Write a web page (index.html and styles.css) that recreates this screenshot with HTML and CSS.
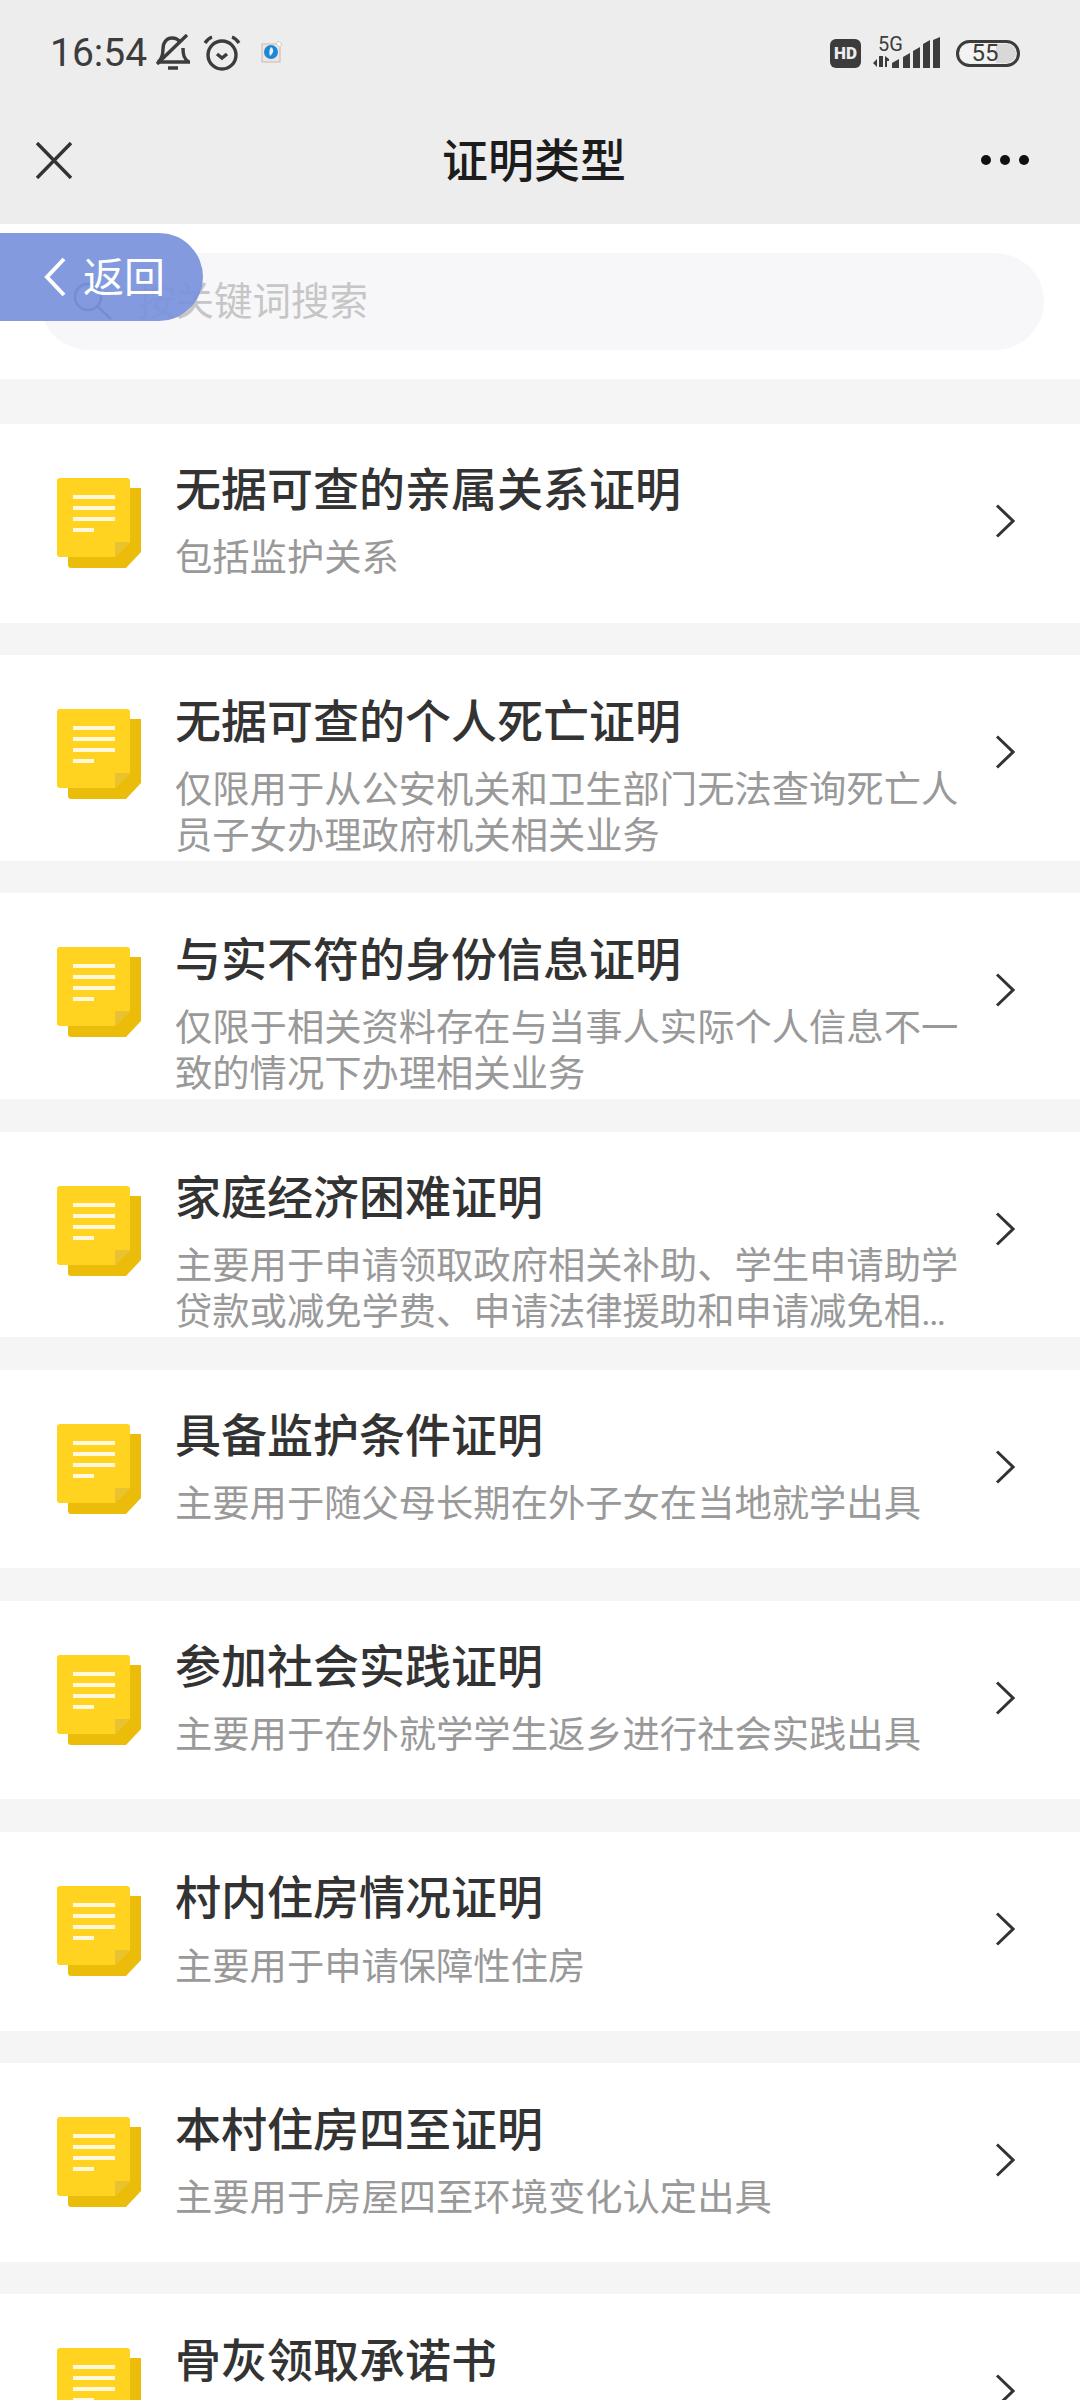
FILE: index.html
```html
<!DOCTYPE html>
<html lang="zh-CN">
<head>
    <meta charset="UTF-8">
    <meta name="viewport" content="width=device-width, initial-scale=1.0">
    <title>证明类型</title>
    <link rel="stylesheet" href="styles.css">
</head>
<body>
    <svg class="defs" width="0" height="0">
        <symbol id="doc" viewBox="0 0 84 90">
            <path d="M11 10H84V74L69 90H14a3 3 0 0 1-3-3Z" fill="#ebbd0a"/>
            <path d="M3 0H70a3 3 0 0 1 3 3V64L58 79H3a3 3 0 0 1-3-3V3a3 3 0 0 1 3-3Z" fill="#ffd31f"/>
            <path d="M58 64H73L58 79Z" fill="#e8c230"/>
            <path d="M16 19H58M16 30H58M16 41H58M16 52H37" stroke="#fff8dc" stroke-width="4" fill="none"/>
        </symbol>
        <symbol id="arrow" viewBox="0 0 20 34">
            <path d="M2 1.5L18 17L2 32.5" stroke="#333" stroke-width="3" fill="none"/>
        </symbol>
    </svg>

    <div class="top">
        <div class="status">
            <div class="status-left">
                <span class="time">16:54</span>
                <svg class="ico-bell" viewBox="0 0 34 38">
                    <path d="M2 28C6 25 7 21 7 15C7 8 11 4 16 4C19 4 22 5 24 8M27 14C27 21 28 25 33 28H2M12 34H22" fill="none" stroke="#3c3c3c" stroke-width="3.4"/>
                    <path d="M1 30L31 1" stroke="#3c3c3c" stroke-width="3.4"/>
                </svg>
                <svg class="ico-alarm" viewBox="0 0 38 36">
                    <circle cx="19" cy="20" r="14" fill="none" stroke="#3c3c3c" stroke-width="3.4"/>
                    <path d="M14 19L19 23L24 19M2 8C4 5 6 3 9 2M36 8C34 5 32 3 29 2" fill="none" stroke="#3c3c3c" stroke-width="3.4"/>
                </svg>
                <svg class="ico-app" viewBox="0 0 22 24">
                    <rect x="1" y="3" width="18" height="18" fill="#efe6e2" stroke="#c9b9b2"/>
                    <path d="M15 3L17 0L21 3L19 6Z" fill="#fff" stroke="#ccc"/>
                    <circle cx="10" cy="11" r="7" fill="#1e88d8"/>
                    <path d="M10 6C13 8 13 12 9 15C8 12 8 9 10 6Z" fill="#e8f4fc"/>
                </svg>
            </div>
            <div class="status-right">
                <span class="hd">HD</span>
                <div class="net">
                    <span class="net-5g">5G</span>
                    <svg class="ico-signal" viewBox="0 0 67 31">
                        <path d="M0 26L4 22V30ZM6 19H10V30H6ZM12 19L16 22V24H14V30H12Z" fill="#3c3c3c"/>
                        <path d="M19 31V26L26 22V31ZM30 31V20L37 16V31ZM40 31V14L47 10V31ZM50 31V7L57 3V31ZM60 31V3L67 0V31Z" fill="#3c3c3c"/>
                    </svg>
                </div>
                <div class="battery"><span class="battery-num">55</span></div>
            </div>
        </div>
        <div class="nav">
            <svg class="nav-close" viewBox="0 0 36 37">
                <path d="M1 1L35 36M35 1L1 36" stroke="#333" stroke-width="3.4"/>
            </svg>
            <div class="nav-title">证明类型</div>
            <div class="nav-more"><i></i><i></i><i></i></div>
        </div>
    </div>

    <div class="search-wrap">
        <div class="search">
            <svg class="search-ico" viewBox="0 0 42 42">
                <circle cx="16" cy="16" r="13" fill="none" stroke="#555" stroke-width="2.5"/>
                <path d="M26 26L39 38" stroke="#555" stroke-width="2.5"/>
            </svg>
            <span class="search-text">按关键词搜索</span>
        </div>
    </div>

    <a class="back">
        <svg class="back-ico" viewBox="0 0 22 40">
            <path d="M20 2L3 20L20 38" fill="none" stroke="#fff" stroke-width="4"/>
        </svg>
        <span class="back-text">返回</span>
    </a>

    <div class="list">
        <div class="item">
            <svg class="item-ico"><use href="#doc"/></svg>
            <div class="item-body">
                <div class="item-title">无据可查的亲属关系证明</div>
                <div class="item-desc">包括监护关系</div>
            </div>
            <svg class="item-arrow"><use href="#arrow"/></svg>
        </div>
        <div class="item">
            <svg class="item-ico"><use href="#doc"/></svg>
            <div class="item-body">
                <div class="item-title">无据可查的个人死亡证明</div>
                <div class="item-desc">仅限用于从公安机关和卫生部门无法查询死亡人员子女办理政府机关相关业务</div>
            </div>
            <svg class="item-arrow"><use href="#arrow"/></svg>
        </div>
        <div class="item">
            <svg class="item-ico"><use href="#doc"/></svg>
            <div class="item-body">
                <div class="item-title">与实不符的身份信息证明</div>
                <div class="item-desc">仅限于相关资料存在与当事人实际个人信息不一致的情况下办理相关业务</div>
            </div>
            <svg class="item-arrow"><use href="#arrow"/></svg>
        </div>
        <div class="item">
            <svg class="item-ico"><use href="#doc"/></svg>
            <div class="item-body">
                <div class="item-title">家庭经济困难证明</div>
                <div class="item-desc item-desc-clamp">主要用于申请领取政府相关补助、学生申请助学贷款或减免学费、申请法律援助和申请减免相关费用等相关业务</div>
            </div>
            <svg class="item-arrow"><use href="#arrow"/></svg>
        </div>
        <div class="item">
            <svg class="item-ico"><use href="#doc"/></svg>
            <div class="item-body">
                <div class="item-title">具备监护条件证明</div>
                <div class="item-desc">主要用于随父母长期在外子女在当地就学出具</div>
            </div>
            <svg class="item-arrow"><use href="#arrow"/></svg>
        </div>
        <div class="item">
            <svg class="item-ico"><use href="#doc"/></svg>
            <div class="item-body">
                <div class="item-title">参加社会实践证明</div>
                <div class="item-desc">主要用于在外就学学生返乡进行社会实践出具</div>
            </div>
            <svg class="item-arrow"><use href="#arrow"/></svg>
        </div>
        <div class="item">
            <svg class="item-ico"><use href="#doc"/></svg>
            <div class="item-body">
                <div class="item-title">村内住房情况证明</div>
                <div class="item-desc">主要用于申请保障性住房</div>
            </div>
            <svg class="item-arrow"><use href="#arrow"/></svg>
        </div>
        <div class="item">
            <svg class="item-ico"><use href="#doc"/></svg>
            <div class="item-body">
                <div class="item-title">本村住房四至证明</div>
                <div class="item-desc">主要用于房屋四至环境变化认定出具</div>
            </div>
            <svg class="item-arrow"><use href="#arrow"/></svg>
        </div>
        <div class="item">
            <svg class="item-ico"><use href="#doc"/></svg>
            <div class="item-body">
                <div class="item-title">骨灰领取承诺书</div>
            </div>
            <svg class="item-arrow"><use href="#arrow"/></svg>
        </div>
    </div>
</body>
</html>
```

FILE: styles.css
```css
html, body {
    margin: 0;
    height: 2400px;
    overflow: hidden;
}

body {
    position: relative;
    background-color: #f5f5f5;
    font-family: "Noto Sans CJK SC", "Noto Sans", sans-serif;
}

.defs {
    display: none;
}

.top {
    height: 224px;
    background-color: #ededed;
}

.status {
    height: 106px;
    display: flex;
    justify-content: space-between;
    align-items: center;
    padding: 0 60px 0 50px;
    color: #3c3c3c;
}

.status-left {
    display: flex;
    align-items: center;
}

.time {
    font-family: Roboto, sans-serif;
    font-size: 39px;
    margin-right: 9px;
}

.ico-bell {
    width: 34px;
    height: 38px;
    margin-right: 13px;
}

.ico-alarm {
    width: 38px;
    height: 36px;
    margin-right: 20px;
}

.ico-app {
    width: 22px;
    height: 24px;
}

.status-right {
    display: flex;
    align-items: center;
}

.hd {
    width: 31px;
    height: 29px;
    border-radius: 6px;
    background-color: #3c3c3c;
    color: #ededed;
    font-family: Roboto, sans-serif;
    font-size: 17px;
    font-weight: 900;
    line-height: 29px;
    text-align: center;
    margin-right: 12px;
}

.net {
    width: 67px;
    height: 33px;
    position: relative;
    margin-right: 16px;
}

.net-5g {
    position: absolute;
    left: 5px;
    top: -3px;
    font-family: Roboto, sans-serif;
    font-size: 20px;
    line-height: 20px;
}

.ico-signal {
    display: block;
    width: 67px;
    height: 31px;
}

.battery {
    width: 58px;
    height: 21px;
    border: 3px solid #3c3c3c;
    border-radius: 14px;
    background: linear-gradient(to right, #f3f3f3 64%, #d8d8d8 64%);
    box-shadow: inset 0 0 0 1px #ededed;
    text-align: center;
    line-height: 21px;
}

.battery-num {
    font-family: Roboto, sans-serif;
    font-size: 24px;
    display: inline-block;
    transform: translateX(-3px);
}

.nav {
    height: 108px;
    display: flex;
    align-items: center;
    justify-content: space-between;
    padding: 0 51px 0 36px;
}

.nav-close {
    width: 36px;
    height: 37px;
}

.nav-title {
    font-size: 46px;
    font-weight: 500;
    color: #1c1c1c;
    margin: 0 0 6px 15px;
}

.nav-more {
    display: flex;
    gap: 9px;
}

.nav-more i {
    width: 10px;
    height: 10px;
    border-radius: 50%;
    background-color: #111;
}

.search-wrap {
    height: 97px;
    padding: 29px 36px 29px 40px;
    background-color: #fff;
}

.search {
    height: 97px;
    display: flex;
    align-items: center;
    border-radius: 49px;
    background-color: #f7f7f9;
    padding-left: 32px;
}

.search-ico {
    width: 42px;
    height: 42px;
    margin-right: 23px;
}

.search-text {
    font-size: 38.5px;
    color: #c6c6c6;
    position: relative;
    top: -4px;
}

.back {
    position: absolute;
    left: 0;
    top: 233px;
    width: 159px;
    height: 88px;
    padding-left: 44px;
    display: flex;
    align-items: center;
    gap: 17px;
    border-radius: 0 44px 44px 0;
    background-color: rgba(120, 146, 219, 0.92);
    color: #fff;
    font-size: 41px;
}

.back-ico {
    width: 22px;
    height: 40px;
}

.back-text {
    margin-bottom: 6px;
}

.list {
    padding-top: 45px;
    display: flex;
    flex-direction: column;
    gap: 32.6px;
}

.item {
    min-height: 198.6px;
    display: flex;
    align-items: flex-start;
    background-color: #fff;
}

.item-ico {
    flex: none;
    width: 84px;
    height: 90px;
    margin: 54px 34px 0 57px;
}

.item-body {
    width: 790px;
    padding: 32.4px 0 2.1px;
}

.item-title {
    font-size: 46px;
    font-weight: 500;
    line-height: 60px;
    color: #333;
    margin-bottom: 19.1px;
}

.item-desc {
    font-family: Roboto, "Noto Sans CJK SC", sans-serif;
    font-size: 37.3px;
    line-height: 46px;
    color: #999;
}

.item-desc-clamp {
    display: -webkit-box;
    -webkit-box-orient: vertical;
    -webkit-line-clamp: 2;
    overflow: hidden;
}

.item-arrow {
    flex: none;
    width: 20px;
    height: 34px;
    margin: 80px 0 0 30px;
}
```
